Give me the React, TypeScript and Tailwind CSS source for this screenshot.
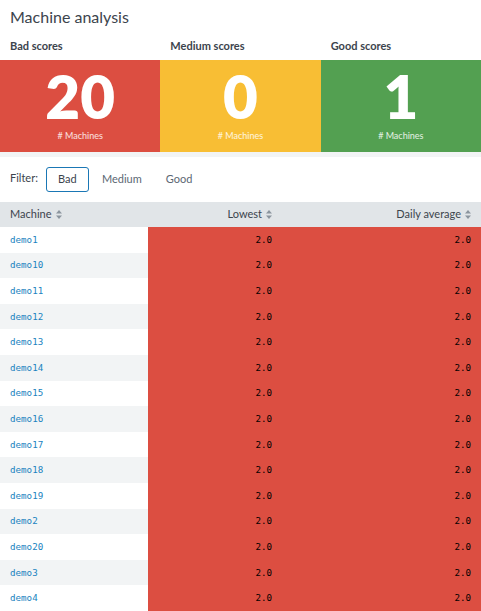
import React from "react";

const machines = [
  "demo1", "demo10", "demo11", "demo12", "demo13", "demo14", "demo15", "demo16",
  "demo17", "demo18", "demo19", "demo2", "demo20", "demo3", "demo4",
];

const panels = [
  { label: "Bad scores", value: "20", bg: "bg-[#dc4e41]" },
  { label: "Medium scores", value: "0", bg: "bg-[#f8be34]" },
  { label: "Good scores", value: "1", bg: "bg-[#53a051]" },
];

const SortIcon = () => (
  <svg width="6" height="9" viewBox="0 0 6 9" className="ml-1 inline-block fill-[#8b959e]">
    <path d="M3 0 L6 3.5 H0 Z" />
    <path d="M3 9 L6 5.5 H0 Z" />
  </svg>
);

export default function App() {
  return (
    <div className="w-[481px] h-[611px] overflow-hidden bg-white text-[#3c444d] font-['Lato',sans-serif]">
      <h1 className="px-[10px] pt-[7px] text-[16px] leading-[20px]">Machine analysis</h1>

      {/* score panels */}
      <div className="mt-[12px] grid grid-cols-3">
        {panels.map((p) => (
          <div key={p.label} className="flex flex-col">
            <div className="px-[10px] h-[21px] text-[11px] font-bold leading-[13px]">{p.label}</div>
            <div className={`${p.bg} h-[92px] flex flex-col items-center text-white`}>
              <div className="mt-[7px] text-[60px] font-extrabold leading-[58px]">{p.value}</div>
              <div className="mt-[5px] text-[9px] leading-[11px] text-white/85"># Machines</div>
            </div>
          </div>
        ))}
      </div>
      <div className="h-[5px] bg-[#f2f4f5]" />

      {/* filter */}
      <div className="h-[45px] flex items-center px-[10px] text-[11px]">
        <span className="mr-[8px] -mt-[2px]">Filter:</span>
        <button className="h-[25px] w-[43px] rounded-[3px] border border-[#1a77b5] text-[#3c444d]">Bad</button>
        <button className="h-[25px] px-[13px] text-[#5c6773]">Medium</button>
        <button className="h-[25px] px-[11px] text-[#5c6773]">Good</button>
      </div>

      {/* table */}
      <div className="grid grid-cols-[148px_134px_199px] h-[25px] items-center bg-[#e1e5e8] text-[11px]">
        <div className="pl-[10px] flex items-center">Machine<SortIcon /></div>
        <div className="pr-[10px] flex items-center justify-end">Lowest<SortIcon /></div>
        <div className="pr-[10px] flex items-center justify-end">Daily average<SortIcon /></div>
      </div>
      {machines.map((m, i) => (
        <div
          key={m}
          className={`grid grid-cols-[148px_134px_199px] h-[25.6px] items-center font-['DejaVu_Sans_Mono',monospace] text-[9.2px] ${
            i % 2 === 0 ? "bg-white" : "bg-[#f2f4f5]"
          }`}
        >
          <div className="pl-[10px] text-[#1a83c0]">{m}</div>
          <div className="h-full bg-[#dc4e41] flex items-center justify-end pr-[10px] text-black">2.0</div>
          <div className="h-full bg-[#dc4e41] flex items-center justify-end pr-[10px] text-black">2.0</div>
        </div>
      ))}
    </div>
  );
}
